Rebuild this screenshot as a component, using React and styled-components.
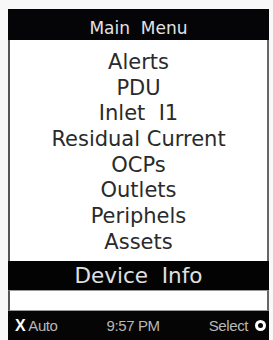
import React from "react";
import styled, { createGlobalStyle } from "styled-components";

const Global = createGlobalStyle`
  html, body { margin: 0; padding: 0; background: #f8f8f8; }
  body { width: 273px; height: 340px; overflow: hidden; }
`;

const Frame = styled.div`
  margin: 9px 0 0 8px;
  width: 261px;
  height: 331px;
  display: flex;
  flex-direction: column;
  background: #fff;
  font-family: "DejaVu Sans", Verdana, sans-serif;
`;

const Header = styled.div`
  height: 31px;
  box-sizing: border-box;
  padding-top: 7px;
  background: #050508;
  color: #e2e2e2;
  font-size: 17px;
  display: flex;
  align-items: center;
  justify-content: center;
  white-space: pre;
`;

const Body = styled.div`
  flex: 1;
  display: flex;
  flex-direction: column;
  border-left: 2px solid #555;
  border-right: 2px solid #666;
  padding-top: 10px;
`;

const Item = styled.div`
  height: 25.7px;
  line-height: 25.7px;
  font-size: 21px;
  color: #2a2a2a;
  text-align: center;
  white-space: pre;
`;

const Selected = styled.div`
  margin-top: auto;
  height: 29px;
  line-height: 29px;
  background: #030303;
  color: #e0e0e0;
  font-size: 21.5px;
  text-align: center;
  white-space: pre;
  margin-left: -2px;
  margin-right: -2px;
`;

const Strip = styled.div`
  height: 19px;
  border: 1px solid #999;
  border-left: 2px solid #555;
  border-right: 2px solid #666;
  background: #fff;
`;

const Footer = styled.div`
  height: 29px;
  background: #050505;
  display: flex;
  align-items: center;
  justify-content: space-between;
  padding: 0 3px 0 7px;
  font-family: "Liberation Sans", Arial, sans-serif;
  font-size: 15px;
  color: #b8b8b8;
  letter-spacing: -0.4px;
`;

const Soft = styled.span`
  display: flex;
  align-items: center;
  gap: 3px;
`;

const Key = styled.b`
  color: #fff;
  font-weight: bold;
  font-size: 16px;
`;

const Ring = styled.span`
  width: 5px;
  height: 5px;
  border: 3px solid #fff;
  border-radius: 50%;
  display: inline-block;
  margin-left: 4px;
`;

const items = ["Alerts", "PDU", "Inlet  I1", "Residual Current", "OCPs", "Outlets", "Periphels", "Assets"];

export default function App() {
  return (
    <>
      <Global />
      <Frame>
        <Header>Main  Menu</Header>
        <Body>
          {items.map((t) => (
            <Item key={t}>{t}</Item>
          ))}
          <Selected>Device  Info</Selected>
        </Body>
        <Strip />
        <Footer>
          <Soft>
            <Key>X</Key>Auto
          </Soft>
          <span>9:57 PM</span>
          <Soft>
            Select<Ring />
          </Soft>
        </Footer>
      </Frame>
    </>
  );
}
